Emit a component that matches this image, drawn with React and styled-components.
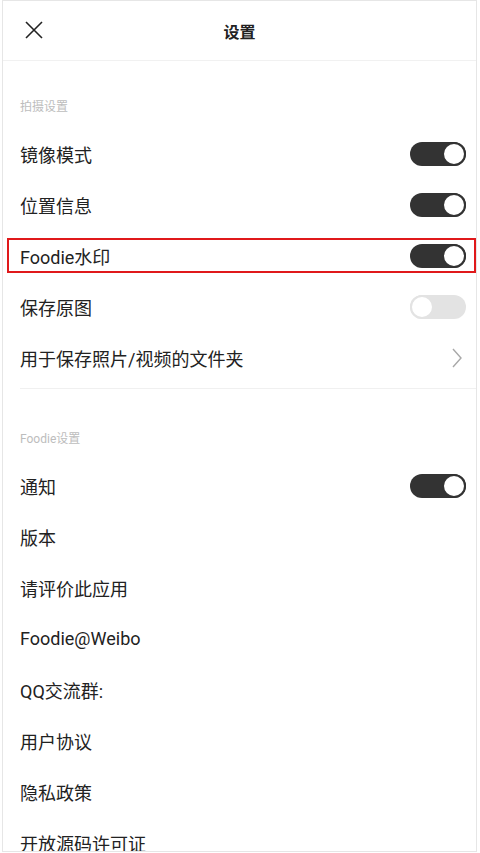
import React, { useState } from 'react';
import styled, { createGlobalStyle } from 'styled-components';

const GlobalStyle = createGlobalStyle`
  html, body {
    margin: 0;
    padding: 0;
    background: #fff;
  }
  body {
    font-family: Roboto, "Noto Sans CJK SC", "Noto Sans", sans-serif;
    color: #222;
  }
`;

const Frame = styled.div`
  box-sizing: border-box;
  width: 475px;
  height: 852px;
  margin-left: 2px;
  border: 1px solid #e6e6e6;
  overflow: hidden;
  background: #fff;
`;

const Header = styled.header`
  display: flex;
  align-items: center;
  justify-content: center;
  position: relative;
  height: 59px;
  border-bottom: 1px solid #f1f1f1;
`;

const CloseButton = styled.button`
  position: absolute;
  left: 19px;
  top: 17px;
  width: 24px;
  height: 24px;
  padding: 0;
  border: none;
  background: none;
  display: flex;
  align-items: center;
  justify-content: center;
`;

const Title = styled.h1`
  margin: 0;
  font-size: 16px;
  font-weight: 700;
  color: #222;
`;

const SectionLabel = styled.div`
  padding: ${({ $top }) => $top}px 0 11px 17px;
  font-size: 12px;
  line-height: 20px;
  color: #bdbdbd;
`;

const Row = styled.div`
  display: flex;
  align-items: center;
  justify-content: space-between;
  height: 51px;
  padding: 0 10px 0 17px;
  font-size: 18px;
  color: #222;
  box-sizing: border-box;
  position: relative;
`;

const Highlight = styled.div`
  position: absolute;
  left: 4px;
  right: 0;
  top: 8px;
  bottom: 8px;
  border: 2px solid #e0191b;
  pointer-events: none;
`;

const Divider = styled.div`
  height: 1px;
  background: #f0f0f0;
  margin: 5px 0 0 17px;
`;

const Track = styled.button`
  position: relative;
  width: 56px;
  height: 24px;
  padding: 0;
  border: none;
  border-radius: 12px;
  background: ${({ $on }) => ($on ? '#333' : '#e3e3e3')};
  cursor: pointer;
`;

const Knob = styled.span`
  position: absolute;
  top: 0;
  left: ${({ $on }) => ($on ? '32px' : '0')};
  width: 24px;
  height: 24px;
  box-sizing: border-box;
  border-radius: 50%;
  background: #fff;
  border: 2px solid ${({ $on }) => ($on ? '#333' : '#e3e3e3')};
`;

const Toggle = ({ initial }) => {
  const [on, setOn] = useState(initial);
  return (
    <Track $on={on} onClick={() => setOn(!on)}>
      <Knob $on={on} />
    </Track>
  );
};

const Chevron = () => (
  <svg width="14" height="22" viewBox="0 0 14 22" style={{ marginRight: 2 }}>
    <path d="M3 2 L11 11 L3 20" fill="none" stroke="#a8a8a8" strokeWidth="1.4" />
  </svg>
);

const shooting = [
  { label: '镜像模式', toggle: true },
  { label: '位置信息', toggle: true },
  { label: 'Foodie水印', toggle: true, marked: true },
  { label: '保存原图', toggle: false },
  { label: '用于保存照片/视频的文件夹', arrow: true },
];

const foodie = [
  { label: '通知', toggle: true },
  { label: '版本' },
  { label: '请评价此应用' },
  { label: 'Foodie@Weibo' },
  { label: 'QQ交流群:' },
  { label: '用户协议' },
  { label: '隐私政策' },
  { label: '开放源码许可证' },
];

const SettingRow = ({ item }) => (
  <Row>
    <span>{item.label}</span>
    {item.toggle !== undefined && <Toggle initial={item.toggle} />}
    {item.arrow && <Chevron />}
    {item.marked && <Highlight />}
  </Row>
);

export default function App() {
  return (
    <>
      <GlobalStyle />
      <Frame>
        <Header>
          <CloseButton>
            <svg width="20" height="20" viewBox="0 0 20 20">
              <path d="M2 2 L18 18 M18 2 L2 18" stroke="#222" strokeWidth="1.6" fill="none" />
            </svg>
          </CloseButton>
          <Title>设置</Title>
        </Header>

        <SectionLabel $top={36}>拍摄设置</SectionLabel>
        {shooting.map((item) => (
          <SettingRow key={item.label} item={item} />
        ))}
        <Divider />

        <SectionLabel $top={40}>Foodie设置</SectionLabel>
        {foodie.map((item) => (
          <SettingRow key={item.label} item={item} />
        ))}
      </Frame>
    </>
  );
}
